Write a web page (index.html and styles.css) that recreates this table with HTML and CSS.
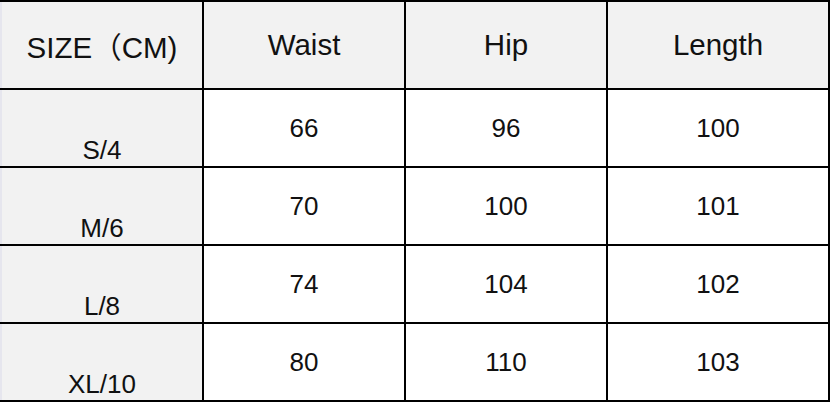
FILE: index.html
```html
<!DOCTYPE html>
<html>
<head>
<meta charset="utf-8">
<link rel="stylesheet" href="styles.css">
</head>
<body>
<table class="size-table">
  <colgroup>
    <col class="c1"><col class="c2"><col class="c3"><col class="c4">
  </colgroup>
  <thead>
    <tr class="head-row">
      <th class="label">SIZE（CM)</th>
      <th>Waist</th>
      <th>Hip</th>
      <th>Length</th>
    </tr>
  </thead>
  <tbody>
    <tr class="data-row"><td class="label size">S/4</td><td>66</td><td>96</td><td>100</td></tr>
    <tr class="data-row"><td class="label size">M/6</td><td>70</td><td>100</td><td>101</td></tr>
    <tr class="data-row"><td class="label size">L/8</td><td>74</td><td>104</td><td>102</td></tr>
    <tr class="data-row"><td class="label size">XL/10</td><td>80</td><td>110</td><td>103</td></tr>
  </tbody>
</table>
</body>
</html>
```
FILE: styles.css
```css
html, body {
  margin: 0;
  padding: 0;
  background: #ffffff;
}
.size-table {
  border-collapse: collapse;
  table-layout: fixed;
  width: 830px;
  font-family: "Liberation Sans", Arial, "Noto Sans CJK SC", sans-serif;
  font-size: 26px;
  color: #111111;
}
.c1 { width: 202px; }
.c2 { width: 202px; }
.c3 { width: 202px; }
.c4 { width: 222px; }
.size-table th,
.size-table td {
  border: 2px solid #000000;
  padding: 0;
  text-align: center;
  vertical-align: middle;
  font-weight: normal;
}
.size-table th {
  background: #f2f2f2;
  font-size: 29.5px;
}
.size-table .label {
  border-left: 2px solid #e6e6ee;
  background: #f2f2f2;
}
.head-row { height: 88px; }
.data-row { height: 78px; }
.size-table td.size {
  vertical-align: bottom;
  padding-bottom: 0;
}
```
